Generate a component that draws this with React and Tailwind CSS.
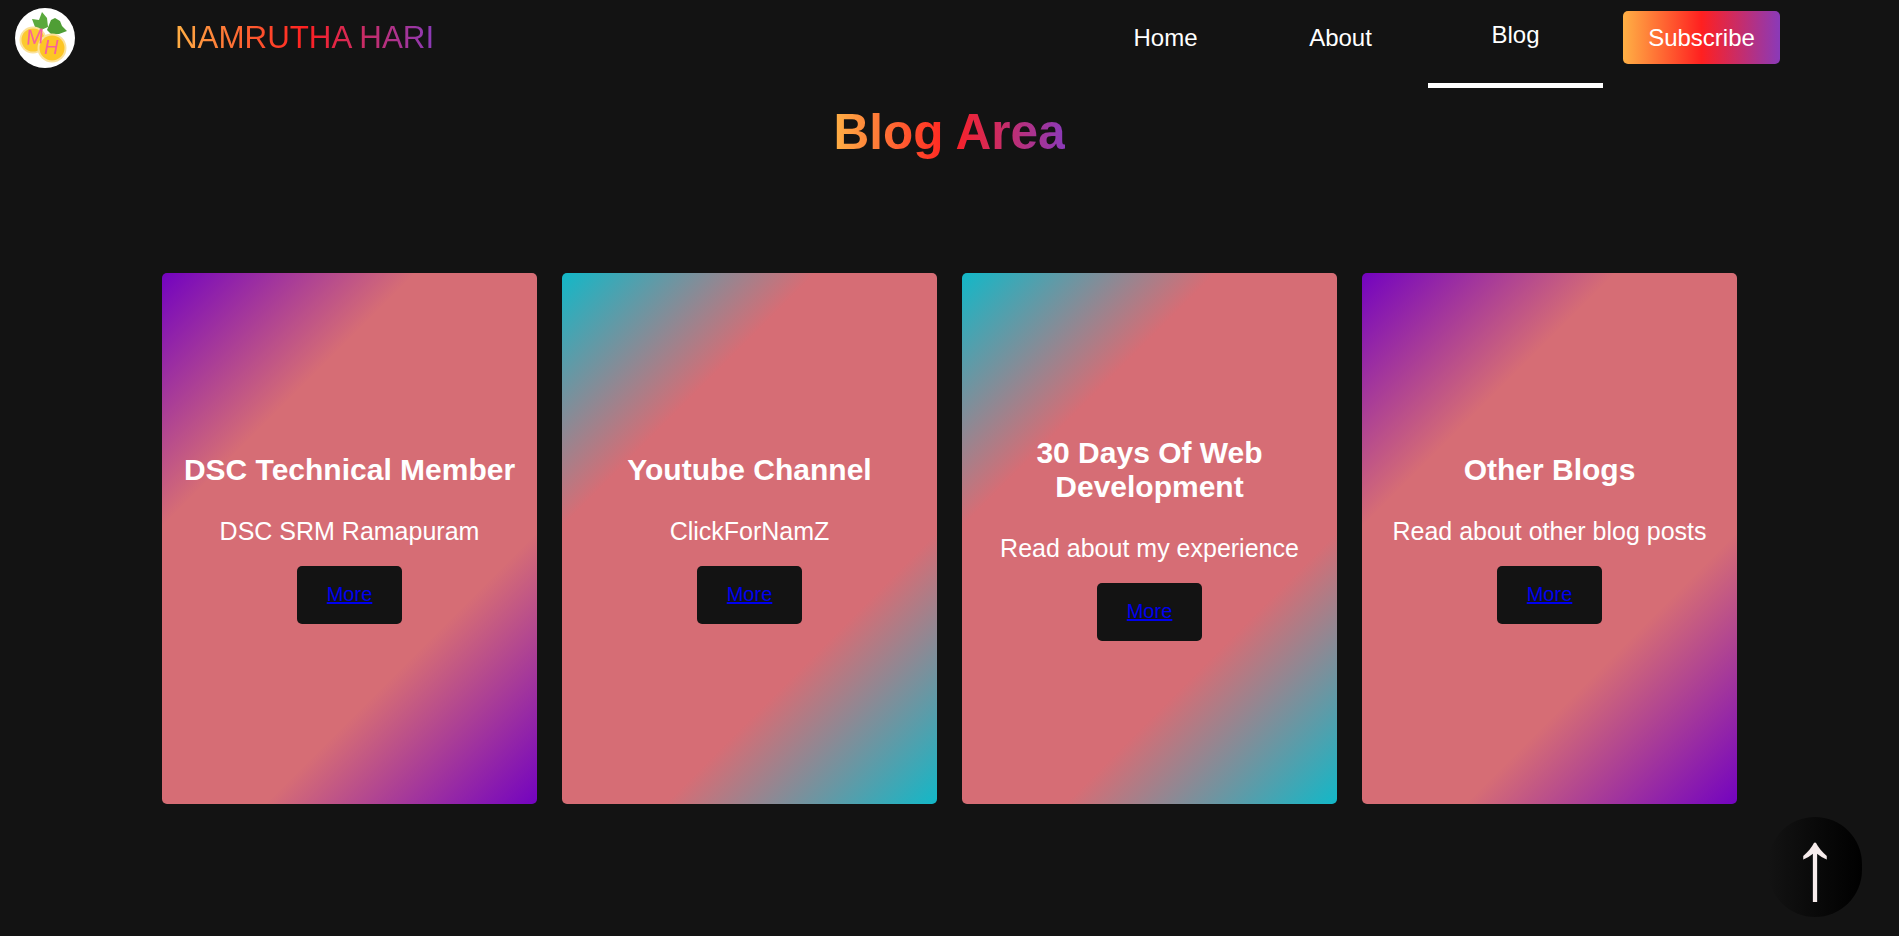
import React from 'react';

const cards = [
    { title: 'DSC Technical Member', text: 'DSC SRM Ramapuram', bg: 'bg-[linear-gradient(135deg,#7303c0_0%,#d66d75_28%,#d66d75_70%,#7303c0_100%)]' },
    { title: 'Youtube Channel', text: 'ClickForNamZ', bg: 'bg-[linear-gradient(135deg,#12b8c8_0%,#d66d75_28%,#d66d75_70%,#12b8c8_100%)]' },
    { title: '30 Days Of Web Development', text: 'Read about my experience', bg: 'bg-[linear-gradient(135deg,#12b8c8_0%,#d66d75_28%,#d66d75_70%,#12b8c8_100%)]' },
    { title: 'Other Blogs', text: 'Read about other blog posts', bg: 'bg-[linear-gradient(135deg,#7303c0_0%,#d66d75_28%,#d66d75_70%,#7303c0_100%)]' },
];

const Logo = () => (
    <svg viewBox="0 0 60 60" className="w-[60px] h-[60px] shrink-0">
        <circle cx="30" cy="30" r="30" fill="#fff" />
        <g className="blur-[0.5px]">
            <path d="M17 11 L24 12 L27 4 L32 10 L33 19 L26 22 L20 19 Z" fill="#5aa93c" />
            <path d="M32 22 L36 12 L40 10 L45 13 L47 18 L52 23 L44 26 L36 26 Z" fill="#4f9e35" />
            <circle cx="18" cy="32" r="13.5" fill="#fbe29a" />
            <circle cx="18" cy="32" r="11.5" fill="#fcc92f" />
            <circle cx="37" cy="40" r="14.5" fill="#fbe29a" />
            <circle cx="37" cy="40" r="12.5" fill="#fdc625" />
            <text x="11" y="36" fontSize="21" fontStyle="italic" fill="#f8609a" fontFamily="'Liberation Sans', sans-serif" transform="rotate(-6 18 30)">M</text>
            <text x="29" y="46" fontSize="20" fontStyle="italic" fill="#f8609a" fontFamily="'Liberation Sans', sans-serif">H</text>
        </g>
    </svg>
);

const BlogCard = ({ card }) => (
    <div className={`w-[375px] h-[531px] rounded-[5px] px-5 flex flex-col items-center justify-center text-center text-white ${card.bg}`}>
        <h3 className="text-[30px] leading-[34px] font-bold">{card.title}</h3>
        <p className="text-[25px] leading-[29px] mt-[30px]">{card.text}</p>
        <a href="#" className="mt-5 w-[105px] h-[58px] pb-[2px] rounded-[5px] bg-[#131313] flex items-center justify-center text-[20px] text-[#0000ee] underline">More</a>
    </div>
);

export default function App() {
    return (
        <div className="relative min-h-screen bg-[#131313] font-['Liberation_Sans',Arial,sans-serif] overflow-hidden">
            <nav className="h-[88px] flex items-start">
                <div className="ml-[15px] mt-[8px]">
                    <Logo />
                </div>
                <a href="#" className="ml-[100px] mt-[19px] text-[31.3px] leading-[37px] bg-[linear-gradient(90deg,#ffb045,#ff2020,#8a3ab9)] bg-clip-text text-transparent">NAMRUTHA HARI</a>
                <ul className="ml-auto mr-[119px] flex items-start text-white text-[24px] leading-[27px]">
                    <li className="w-[175px] h-[88px] pt-[24px] text-center">Home</li>
                    <li className="w-[175px] h-[88px] pt-[24px] text-center">About</li>
                    <li className="w-[175px] h-[88px] pt-[21px] text-center border-b-[5px] border-white">Blog</li>
                    <li className="ml-5 mt-[11px] w-[157px] h-[53px] rounded-[5px] flex items-center justify-center bg-[linear-gradient(90deg,#ffb045,#ff2020,#8a3ab9)]">Subscribe</li>
                </ul>
            </nav>

            <div className="mt-4 text-center">
                <h1 className="inline-block text-[49.5px] leading-[55px] font-bold bg-[linear-gradient(90deg,#ffb045,#ff2020,#8a3ab9)] bg-clip-text text-transparent">Blog Area</h1>
            </div>

            <div className="mt-[114px] flex justify-center gap-[25px]">
                {cards.map((card) => (
                    <BlogCard key={card.title} card={card} />
                ))}
            </div>

            <button className="absolute left-[1768px] top-[817px] w-[94px] h-[100px] pb-[6px] rounded-full bg-[linear-gradient(90deg,#131313,#000000)] text-[#f7ecec] text-[100px] leading-[94px] text-center">↑</button>
        </div>
    );
}
